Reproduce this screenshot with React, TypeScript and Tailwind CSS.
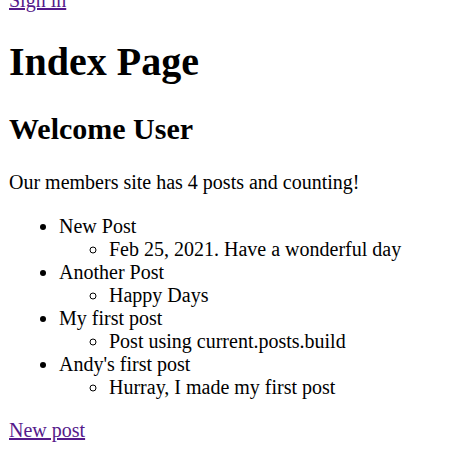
export default function App() {
  const posts = [
    ["New Post", "Feb 25, 2021. Have a wonderful day"],
    ["Another Post", "Happy Days"],
    ["My first post", "Post using current.posts.build"],
    ["Andy's first post", "Hurray, I made my first post"],
  ];
  return (
    <div className="font-['Liberation_Serif',serif] text-[20px] leading-[1.15] text-black bg-white pl-[9px] pr-[10px] mt-[-11px]">
      <a href="#" className="text-[#551a8b] underline">Sign in</a>
      <h1 className="text-[40px] font-bold my-[26.8px]">Index Page</h1>
      <h2 className="text-[30px] font-bold my-[24.9px]">Welcome User</h2>
      <p className="my-[20px]">Our members site has 4 posts and counting!</p>
      <ul className="list-disc pl-[50px] mt-[21px] mb-[20px]">
        {posts.map(([t, d]) => (
          <li key={t}>
            {t}
            <ul className="list-[circle] pl-[50px]">
              <li>{d}</li>
            </ul>
          </li>
        ))}
      </ul>
      <a href="#" className="text-[#551a8b] underline">New post</a>
    </div>
  );
}
